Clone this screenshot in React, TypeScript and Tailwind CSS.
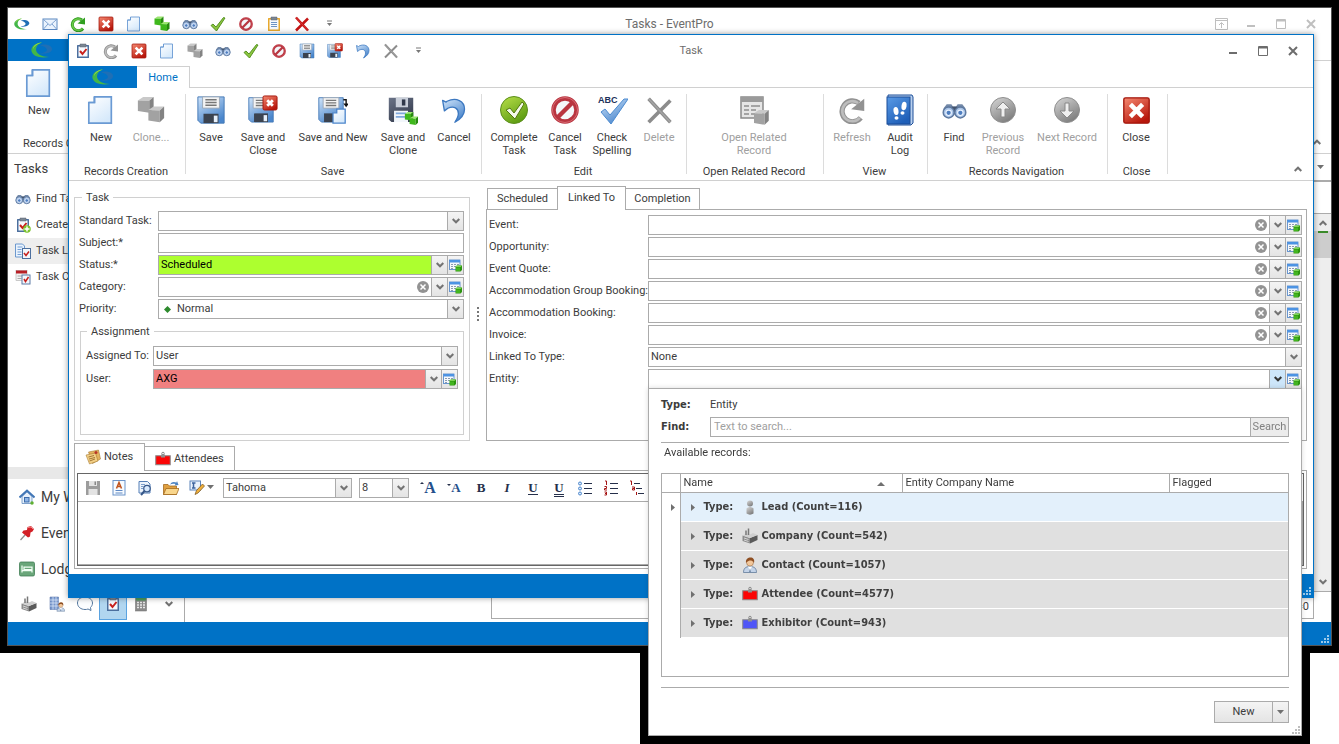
import { useState } from "react";
import type { ReactNode } from "react";

type IconProps = { size?: number; gray?: boolean };

function Icon({ size = 16, box = "0 0 32 32", children }: { size?: number; box?: string; children: ReactNode }) {
  return (
    <svg width={size} height={size} viewBox={box} fill="none" aria-hidden="true" className="block shrink-0">
      {children}
    </svg>
  );
}

/* shared gradients, referenced by id from every icon */
function Gradients() {
  const stops = [
    ["gBlue", "#cfe4fa", "#4a86cc"],
    ["gPage", "#ffffff", "#d6e9fb"],
    ["gRed", "#f58a72", "#b8170c"],
    ["gGreen", "#b9e04a", "#5d9c12"],
    ["gGray", "#d8d8d8", "#7f7f7f"],
    ["gBook", "#5a9be6", "#1f5fb8"],
    ["gDark", "#6b7488", "#343b4d"],
  ];
  return (
    <svg width="0" height="0" className="absolute" aria-hidden="true">
      <defs>
        {stops.map(([id, from, to]) => (
          <linearGradient key={id} id={id} x1="0" y1="0" x2="0.6" y2="1">
            <stop offset="0" stopColor={from} />
            <stop offset="1" stopColor={to} />
          </linearGradient>
        ))}
      </defs>
    </svg>
  );
}

function Logo({ width = 22 }: { width?: number }) {
  return (
    <svg width={width} height={16} viewBox="0 0 22 16" aria-hidden="true" className="block">
      <path d="M11 .5C3 1-1 6 .8 10 2.600 14 8 16.500 18 15 11 15 5 12 5 7.500 5 4 7 2 11 .5Z" fill="#43b649" />
      <path d="M11 .5C5 1 2 4 2 7c1-3 4-5 9-6.500Z" fill="#9bd84a" />
      <path d="M9 3.500C14 1 22 3.500 21 7.800 20 11 14 12.300 9 11.500c5-.6 8-2.500 6.500-4.800C14.500 4.800 12 4 9 3.500Z" fill="#1f6fb5" />
    </svg>
  );
}

function Mail() {
  return (
    <Icon>
      <rect x="2" y="6" width="28" height="21" fill="#eaf3fd" stroke="#5b87bf" strokeWidth="2" />
      <path d="M3 7l13 12L29 7M3 26l9-10M29 26l-9-10" stroke="#7fa3d1" strokeWidth="2" />
    </Icon>
  );
}

function Refresh({ size, gray }: IconProps) {
  const color = gray ? "#929292" : "#2f9e1f";
  const light = gray ? "#bdbdbd" : "#6cc94a";
  return (
    <Icon size={size}>
      <path d="M26 25A12 12 0 1 1 24 8" stroke={color} strokeWidth="6" />
      <path d="M25 25A11.500 11.500 0 1 1 23 8" stroke={light} strokeWidth="3" />
      <path d="M30 3v14l-15-2Z" fill={color} />
    </Icon>
  );
}

function CloseBox({ size }: IconProps) {
  return (
    <Icon size={size}>
      <rect x="2" y="2" width="28" height="28" rx="2" fill="url(#gRed)" stroke="#a3150b" strokeWidth="1.500" />
      <path d="M11 11l10 10M21 11L11 21" stroke="#fff" strokeWidth="5" strokeLinecap="square" />
    </Icon>
  );
}

function Page({ size }: IconProps) {
  return (
    <Icon size={size}>
      <path d="M9 2h18v28H3V8h6Z" fill="url(#gPage)" stroke="#6a9ad4" strokeWidth="1.800" />
      <path d="M9 2v6H3" stroke="#6a9ad4" strokeWidth="1.800" />
    </Icon>
  );
}

function CubeShape({ x, y, gray, s = 1 }: { x: number; y: number; gray?: boolean; s?: number }) {
  const [top, front, side] = gray ? ["#c9c9c9", "#a2a2a2", "#838383"] : ["#9be66f", "#3fb81c", "#268a0d"];
  return (
    <g transform={`translate(${x} ${y}) scale(${s})`}>
      <path d="M0 4L6 0h12l-5 4.500Z" fill={top} />
      <path d="M0 4l13 .5V18L0 16Z" fill={front} />
      <path d="M13 4.500L18 0v13l-5 5Z" fill={side} />
    </g>
  );
}

function Cubes({ size, gray }: IconProps) {
  return (
    <Icon size={size}>
      <CubeShape x={1} y={1} gray={gray} />
      <CubeShape x={13} y={12} gray={gray} />
    </Icon>
  );
}

function Binoculars({ size }: IconProps) {
  return (
    <Icon size={size}>
      <path d="M2 13l4-5h6l2 3h4l2-3h6l4 5v8H2Z" fill="#7389a8" />
      <path d="M12 11h8v9h-8Z" fill="#43546e" />
      <circle cx="8.500" cy="18.500" r="7" fill="#a9c3e6" stroke="#5d789e" strokeWidth="1.800" />
      <circle cx="23.500" cy="18.500" r="7" fill="#a9c3e6" stroke="#5d789e" strokeWidth="1.800" />
      <circle cx="8.500" cy="19" r="3.500" fill="#4f7ec0" stroke="#e8f2ff" strokeWidth="1.500" />
      <circle cx="23.500" cy="19" r="3.500" fill="#4f7ec0" stroke="#e8f2ff" strokeWidth="1.500" />
    </Icon>
  );
}

function CheckMark() {
  return (
    <Icon>
      <path d="M2 19l4-3 6 6L27 3l3 1-17 26Z" fill="#8cc540" stroke="#4b8a16" strokeWidth="1.800" strokeLinejoin="round" />
    </Icon>
  );
}

function Ban({ size }: IconProps) {
  return (
    <Icon size={size}>
      <circle cx="16" cy="16" r="11.500" fill="#f4f7fa" stroke="#b93540" strokeWidth="4.500" />
      <path d="M8 24L24 8" stroke="#b93540" strokeWidth="4.500" />
      <circle cx="16" cy="16" r="12.500" stroke="#d76a72" strokeWidth="1" />
    </Icon>
  );
}

function Clipboard({ checked, plus, amber }: { checked?: boolean; plus?: boolean; amber?: boolean }) {
  return (
    <Icon>
      <rect x="4" y="4" width="24" height="26" rx="1" fill={amber ? "#e8a92e" : "#4c6f9e"} />
      <rect x="7" y="7" width="18" height="20" fill="#f5f9fe" />
      <path d="M10 2h12v6H10Z" fill="#7c8793" stroke="#586370" />
      {amber && <path d="M10 13h12M10 17h12M10 21h12" stroke="#6d93c4" strokeWidth="2" />}
      {checked && <path d="M10 16l5 6 8-10" stroke="#c8201c" strokeWidth="4" />}
      {plus && (
        <>
          <circle cx="24" cy="24" r="7.500" fill="#7cc32c" />
          <path d="M24 19v10M19 24h10" stroke="#fff" strokeWidth="3" />
        </>
      )}
    </Icon>
  );
}

function Cross({ size, gray }: IconProps) {
  return (
    <Icon size={size}>
      <path d="M4 3l24 26M28 5L4 29" stroke={gray ? "#8c8c8c" : "#c41414"} strokeWidth={gray ? 4 : 5} />
      <path d="M4 3l24 26" stroke={gray ? "#a5a5a5" : "#e04040"} strokeWidth="1.500" />
    </Icon>
  );
}

function FloppyShape({ dark }: { dark?: boolean }) {
  if (dark) {
    return (
      <g>
        <path d="M2 2h28v28H5l-3-3Z" fill="url(#gDark)" />
        <path d="M10 2h14v11H10Z" fill="#c9cfda" />
        <path d="M17 4h4v7h-4Z" fill="#30384a" />
        <path d="M8 17h16v13H8Z" fill="#f2f6fb" />
        <path d="M10 20h12M10 24h12" stroke="#7fa8dc" strokeWidth="2" />
      </g>
    );
  }
  return (
    <g>
      <path d="M2 2h28v28H5l-3-3Z" fill="url(#gBlue)" stroke="#4378b5" />
      <path d="M7 2h18v12H7Z" fill="#f4f4f4" stroke="#9ba7b5" />
      <path d="M10 5h12M10 8h12M10 11h12" stroke="#777" strokeWidth="1.500" />
      <path d="M8 20h16v10H8Z" fill="#3b4350" />
      <path d="M19 22h4v7h-4Z" fill="#e6f0fb" />
    </g>
  );
}

function Floppy({ size, dark, badge }: IconProps & { dark?: boolean; badge?: "close" | "new" | "clone" }) {
  return (
    <Icon size={size}>
      {badge ? (
        <g transform="translate(-1 1) scale(.93)">
          <FloppyShape dark={dark} />
        </g>
      ) : (
        <FloppyShape dark={dark} />
      )}
      {badge === "close" && (
        <>
          <rect x="16" y="1" width="15" height="15" rx="1.500" fill="url(#gRed)" stroke="#a3150b" />
          <path d="M20.500 5.500l6 6M26.500 5.500l-6 6" stroke="#fff" strokeWidth="3" />
        </>
      )}
      {badge === "new" && (
        <>
          <path d="M20 15h9v15H16V19h4Z" fill="url(#gPage)" stroke="#4d86cc" strokeWidth="1.400" />
          <path d="M27 5h3v6" stroke="#111" strokeWidth="1.500" />
          <path d="M27 9h6l-3 4Z" fill="#111" />
        </>
      )}
      {badge === "clone" && (
        <>
          <CubeShape x={18} y={18} s={0.5} />
          <CubeShape x={23} y={23} s={0.5} />
        </>
      )}
    </Icon>
  );
}

function Undo({ size }: IconProps) {
  return (
    <Icon size={size}>
      <path
        d="M3 5l2 12 4-3c7-3 12 0 12 6 0 4-2 7-4 10 7-4 11-9 11-15C28 6 19 1 8 6l-1 1Z"
        fill="url(#gBlue)"
        stroke="#3c78c0"
        strokeWidth="1.500"
        strokeLinejoin="round"
      />
    </Icon>
  );
}

function CompleteTask() {
  return (
    <Icon size={32}>
      <circle cx="16" cy="16" r="13.500" fill="url(#gGreen)" stroke="#5c8f1d" />
      <path d="M8 16l4-2 4 5 8-11 2 2-9 15Z" fill="#f4faea" stroke="#52770f" strokeLinejoin="round" />
    </Icon>
  );
}

function Spelling() {
  return (
    <Icon size={32}>
      <text x="2" y="9" fontFamily="Liberation Sans, sans-serif" fontWeight="700" fontSize="9" fill="#20305a">
        ABC
      </text>
      <path d="M5 18l4-3 5 6L28 5l4 0-17 25Z" fill="url(#gBlue)" stroke="#4c8bd0" strokeLinejoin="round" />
    </Icon>
  );
}

function RelatedRecord() {
  return (
    <Icon size={32}>
      <rect x="3" y="3" width="22" height="21" fill="#e6e6e6" stroke="#8a8a8a" strokeWidth="1.500" />
      <path d="M3 3h22v5H3Z" fill="#9a9a9a" />
      <path d="M6 12h5M6 16h5M6 20h5M13 12h9M13 16h5M13 20h4" stroke="#8f8f8f" strokeWidth="1.500" />
      <CubeShape x={16} y={16} gray s={0.820} />
    </Icon>
  );
}

function AuditBook() {
  return (
    <Icon size={32}>
      <path d="M4 1h24l1 2v26l-2 2H4Z" fill="#b9d0ee" stroke="#1c4f99" />
      <rect x="3" y="3" width="23" height="27" fill="url(#gBook)" stroke="#1b4d98" />
      <g fill="#fff">
        <ellipse cx="12" cy="17" rx="2.500" ry="4" transform="rotate(-8 12 17)" />
        <ellipse cx="12.500" cy="24" rx="2" ry="1.800" />
        <ellipse cx="20" cy="12" rx="2.500" ry="4.200" transform="rotate(8 20 12)" />
        <ellipse cx="18.500" cy="19" rx="2" ry="1.800" />
      </g>
    </Icon>
  );
}

function RoundArrow({ down }: { down?: boolean }) {
  return (
    <Icon size={32}>
      <circle cx="16" cy="16" r="12.500" fill="url(#gGray)" stroke="#8e8e8e" />
      <path
        d={down ? "M14 9h4v8h5l-7 7-7-7h5Z" : "M14 23h4v-8h5l-7-7-7 7h5Z"}
        fill="#efefef"
        stroke="#888"
        strokeLinejoin="round"
      />
    </Icon>
  );
}

function TaskList() {
  return (
    <Icon>
      <path d="M1 2h14l4 4v22H1Z" fill="#eaf3fd" stroke="#5f8fc9" strokeWidth="1.800" />
      <path d="M5 8h10M5 13h8M5 18h8M5 23h8" stroke="#74a0d6" strokeWidth="2" />
      <rect x="15" y="11" width="16" height="20" fill="#f3f7fc" stroke="#4c6f9e" strokeWidth="2" />
      <path d="M18 20l4 5 6-8" stroke="#c8201c" strokeWidth="3" />
    </Icon>
  );
}

function TaskCalendar() {
  return (
    <Icon>
      <rect x="2" y="3" width="22" height="20" fill="#f3f3f3" stroke="#999" />
      <path d="M2 3h22v6H2Z" fill="#b81f26" />
      <path d="M5 14h14M5 19h8" stroke="#a8a8a8" strokeWidth="2" />
      <rect x="14" y="12" width="16" height="18" fill="#f3f7fc" stroke="#5c7ba5" strokeWidth="2" />
      <path d="M18 20l3 5 6-9" stroke="#c8201c" strokeWidth="3" />
    </Icon>
  );
}

function House() {
  return (
    <Icon>
      <path d="M6 15v14h20V15L16 6Z" fill="#e7f0fb" stroke="#5a86bb" strokeWidth="1.500" />
      <path d="M1 17L16 3l15 14" stroke="#4176b6" strokeWidth="4" />
      <rect x="11" y="17" width="9" height="9" fill="#8db4e6" stroke="#3d6cab" strokeWidth="2" />
      <circle cx="26" cy="28" r="3.500" fill="#5fb030" />
    </Icon>
  );
}

function Pin() {
  return (
    <Icon>
      <path d="M12 20L3 30" stroke="#8b8b8b" strokeWidth="2.500" />
      <path d="M17 4l7-2 6 6-3 5-4 2-1 8-4 2L6 15l3-4 7-1Z" fill="#d32027" />
      <path d="M18 5l6-1 4 4" stroke="#f28a8a" strokeWidth="2" />
    </Icon>
  );
}

function Lodging() {
  return (
    <Icon>
      <rect x="1" y="2" width="30" height="28" rx="3" fill="#6aa67a" stroke="#3c7a50" strokeWidth="1.500" />
      <path d="M6 9v14M6 19h20v4M10 12h16v5H10Z" stroke="#f3fff6" strokeWidth="2.500" />
    </Icon>
  );
}

function Factory() {
  return (
    <Icon>
      <path d="M1 15l15 5v11L1 26Z" fill="#8c8c8c" />
      <path d="M16 20l15-6v10l-15 7Z" fill="#5a5a5a" />
      <path d="M1 15l9-4 6 2 6-3 9 4-15 6Z" fill="#cfcfcf" />
      <path d="M8 5v9M13 1v13" stroke="#777" strokeWidth="3" />
      <path d="M4 20l9 3M4 24l9 3" stroke="#ececec" strokeWidth="1.500" />
    </Icon>
  );
}

function PersonShape() {
  return (
    <g>
      <path d="M3 31c0-8 4-12 13-12s13 4 13 12Z" fill="#c3d3e8" stroke="#5b7596" strokeWidth="1.500" />
      <path d="M12 19l4 9 4-9Z" fill="#fff" />
      <path d="M16 22l-1.500 8h3Z" fill="#5b7596" />
      <circle cx="16" cy="11" r="7" fill="#f2c79b" stroke="#8a5a30" />
      <path d="M8 12C7 4 12 1 17 1s9 4 7 11c-2-5-6-5-9-5-3 1-5 2-7 5Z" fill="#8f4f22" />
    </g>
  );
}

function Contact() {
  return (
    <Icon>
      <PersonShape />
    </Icon>
  );
}

function BuildingPerson() {
  return (
    <Icon>
      <path d="M2 2h17v25H2Z" fill="#7796cb" stroke="#4d6aa3" />
      <path d="M2 8h17M2 14h17M2 20h17M8 2v25M14 2v25" stroke="#dce8fa" strokeWidth="1.500" />
      <g transform="translate(14 12) scale(.6)">
        <PersonShape />
      </g>
    </Icon>
  );
}

function Bubble() {
  return (
    <Icon>
      <path
        d="M16 2c8 0 15 5 15 12 0 4-2 7-4 9l1 6-6-3c-2 1-4 1-6 1C8 27 1 22 1 14S8 2 16 2Z"
        fill="#fbfdff"
        stroke="#55789f"
        strokeWidth="2"
      />
    </Icon>
  );
}

function Calculator() {
  return (
    <Icon>
      <rect x="5" y="2" width="22" height="28" fill="#8a8a8a" stroke="#6a6a6a" />
      <rect x="6" y="3" width="20" height="6" fill="#4f9e5c" />
      <path d="M8 13h4M14 13h4M20 13h4M8 18h4M14 18h4M20 18h4M8 23h4M14 23h4M20 23h4" stroke="#e8e8e8" strokeWidth="3" />
    </Icon>
  );
}

function Lead() {
  return (
    <Icon>
      <circle cx="16" cy="9" r="6" fill="url(#gGray)" />
      <path d="M9 19c4-4 10-4 14 0v10c-4 3-10 3-14 0Z" fill="url(#gGray)" />
    </Icon>
  );
}

function Badge({ blue }: { blue?: boolean }) {
  return (
    <Icon>
      <rect x="1.500" y="9.500" width="29" height="18" fill={blue ? "#4f55f7" : "#fb0505"} stroke="#888" strokeWidth="2" />
      <path d="M12 7h8v6h-8Z" fill="#909090" />
      <circle cx="16" cy="5" r="2.500" stroke="#888" strokeWidth="2" />
    </Icon>
  );
}

function NoteIcon() {
  return (
    <Icon>
      <path d="M7 6l20-4 4 18-16 9Z" fill="#e3b45f" stroke="#9a6b1f" />
      <path d="M2 12l19-4 5 16-17 6Z" fill="#f2cf86" stroke="#9a6b1f" />
      <path d="M7 16l11-3M8 20l12-3M9 24l11-4" stroke="#8a5a18" strokeWidth="1.500" />
      <circle cx="22" cy="7" r="3" fill="#b8352a" />
    </Icon>
  );
}

function RecordLink() {
  return (
    <Icon size={13} box="0 0 26 26">
      <rect x="1" y="2" width="21" height="19" fill="#f5f8fc" stroke="#3c78c4" strokeWidth="1.500" />
      <path d="M1 2h21v5H1Z" fill="#4c93e3" />
      <path d="M4 11h4M10 11h4M16 11h4M4 15h4M10 15h4M4 19h4" stroke="#8b9bb0" strokeWidth="2" />
      <path d="M13 15l3-2h10v9l-3 3H13Z" fill="#2c940f" />
      <path d="M13 15l3-2h10l-3 3H13Z" fill="#7ed455" />
      <path d="M14 17h8v7h-8Z" fill="#43b520" />
    </Icon>
  );
}

function Chevron({ up, color = "#737373" }: { up?: boolean; color?: string }) {
  return (
    <svg width="8" height="6" viewBox="0 0 8 6" fill="none" aria-hidden="true">
      <path d={up ? "M.7 5L4 1.700 7.300 5" : "M.7 1L4 4.300 7.300 1"} stroke={color} strokeWidth="2" />
    </svg>
  );
}

function Arrow({ dir = "down" }: { dir?: "down" | "up" | "right" }) {
  const paths = { down: "M1 2h7L4.500 6Z", up: "M1 7h8L5 3Z", right: "M3 1v7L7 4.500Z" };
  return (
    <svg width="9" height="9" viewBox="0 0 9 9" aria-hidden="true" className="block shrink-0">
      <path d={paths[dir]} fill="#707070" />
    </svg>
  );
}

function Overflow() {
  return (
    <svg width="7" height="7" viewBox="0 0 7 7" aria-hidden="true">
      <path d="M1 1h5" stroke="#777" />
      <path d="M1 3h5L3.500 6Z" fill="#777" />
    </svg>
  );
}

function Grip({ className }: { className: string }) {
  return (
    <svg width="8" height="8" viewBox="0 0 8 8" aria-hidden="true" className={className}>
      <path d="M6 0h2v2H6ZM3 3h2v2H3ZM6 3h2v2H6ZM0 6h2v2H0ZM3 6h2v2H3ZM6 6h2v2H6Z" fill="currentColor" />
    </svg>
  );
}

function QuickBar({ items }: { items: [string, ReactNode][] }) {
  return (
    <div className="flex items-center">
      {items.map(([name, icon]) => (
        <button key={name} type="button" aria-label={name} className="flex h-6 w-7 items-center justify-center pr-px">
          {icon}
        </button>
      ))}
    </div>
  );
}

function WindowButtons({ pinned }: { pinned?: boolean }) {
  return (
    <div className={pinned ? "flex justify-end pr-[5px] text-[#bfbfbf]" : "flex justify-end pr-[5px] text-[#6d6d6d]"}>
      {pinned && (
        <button type="button" aria-label="Ribbon display" className="flex h-6 w-[30px] items-center justify-center">
          <svg width="13" height="12" viewBox="0 0 13 12" fill="none" stroke="currentColor">
            <path d="M.5.5h12v11H.5ZM.5 2.500h12M6.500 10V5M4 7l2.500-2.500L9 7" />
          </svg>
        </button>
      )}
      <button type="button" aria-label="Minimize" className="flex h-6 w-[30px] items-center justify-center pt-1">
        <svg width="8" height="2" viewBox="0 0 8 2">
          <path d="M0 0h8v2H0Z" fill="currentColor" />
        </svg>
      </button>
      <button type="button" aria-label="Maximize" className="flex h-6 w-[30px] items-center justify-center">
        <svg width="10" height="10" viewBox="0 0 10 10" fill="none" stroke="currentColor">
          <path d="M.5.5h9v9h-9ZM0 1.500h10M0 2h10" />
        </svg>
      </button>
      <button type="button" aria-label="Close window" className="flex h-6 w-[30px] items-center justify-center">
        <svg width="10" height="10" viewBox="0 0 10 10" stroke="currentColor" strokeWidth="2">
          <path d="M1 1l8 8M9 1L1 9" />
        </svg>
      </button>
    </div>
  );
}

function RibbonItem({
  label,
  icon,
  width,
  disabled,
}: {
  label: string;
  icon: ReactNode;
  width: string;
  disabled?: boolean;
}) {
  return (
    <button type="button" disabled={disabled} className={`${width} flex shrink-0 flex-col items-center gap-[5px] disabled:text-[#a0a0a0]`}>
      <span className="flex h-8 items-center justify-center">{icon}</span>
      <span className="text-center leading-[13px] whitespace-pre">{label}</span>
    </button>
  );
}

function RibbonGroup({ title, width, children }: { title: string; width: string; children: ReactNode }) {
  return (
    <>
      <div className={`${width} flex shrink-0 flex-col pt-1.5 pr-1.5 pb-0.5 pl-1`}>
        <div className="flex items-start">{children}</div>
        <div className="mt-auto text-center leading-[13px] whitespace-nowrap">{title}</div>
      </div>
      <div className="my-1.5 w-px shrink-0 bg-[#dcdcdc]" />
    </>
  );
}

const BOX = "flex h-5 min-w-0 border border-[#ababab] bg-white";
const SIDE_BUTTON =
  "flex w-4 shrink-0 items-center justify-center border-l border-[#ababab] bg-linear-to-b from-[#f4f4f4] to-[#e4e4e4]";

function Lookup({
  id,
  value = "",
  tone = "bg-white",
  clearable,
  open,
}: {
  id: string;
  value?: string;
  tone?: string;
  clearable?: boolean;
  open?: boolean;
}) {
  const [text, setText] = useState(value);
  return (
    <div className={BOX}>
      <input
        id={id}
        value={text}
        onChange={(e) => setText(e.target.value)}
        className={`${tone} w-full min-w-0 flex-1 px-0.5 text-black outline-none`}
      />
      {clearable && (
        <button type="button" aria-label="Clear" className="flex w-4 shrink-0 items-center justify-center" onClick={() => setText("")}>
          <svg width="12" height="12" viewBox="0 0 12 12">
            <circle cx="6" cy="6" r="6" fill="#939393" />
            <path d="M3.500 3.500l5 5M8.500 3.500l-5 5" stroke="#fff" strokeWidth="1.500" />
          </svg>
        </button>
      )}
      <button
        type="button"
        aria-label="Show list"
        className={open ? "flex w-4 shrink-0 items-center justify-center border-l border-[#ababab] bg-[#cde6fa]" : SIDE_BUTTON}
      >
        <Chevron color={open ? "#333333" : "#737373"} />
      </button>
      <button type="button" aria-label="Open record" className={SIDE_BUTTON}>
        <RecordLink />
      </button>
    </div>
  );
}

function Dropdown({ id, value = "", icon }: { id: string; value?: string; icon?: ReactNode }) {
  return (
    <div className={`${BOX} relative`}>
      {icon && <span className="flex w-4 shrink-0 items-center justify-center">{icon}</span>}
      <select id={id} defaultValue={value} aria-label={id} className="w-full min-w-0 appearance-none bg-transparent px-0.5 outline-none">
        <option>{value}</option>
      </select>
      <span className={`${SIDE_BUTTON} pointer-events-none absolute inset-y-0 right-0`}>
        <Chevron />
      </span>
    </div>
  );
}

const LINKS = ["Event", "Opportunity", "Event Quote", "Accommodation Group Booking", "Accommodation Booking", "Invoice"];

const GROUPS: [string, number, ReactNode][] = [
  ["Lead", 116, <Lead />],
  ["Company", 542, <Factory />],
  ["Contact", 1057, <Contact />],
  ["Attendee", 4577, <Badge />],
  ["Exhibitor", 943, <Badge blue />],
];

const NAV: [string, ReactNode][] = [
  ["Find Tasks", <Binoculars />],
  ["Create Task", <Clipboard checked plus />],
  ["Task List", <TaskList />],
  ["Task Calendar", <TaskCalendar />],
];

const MODULES: [string, ReactNode][] = [
  ["My Work", <House />],
  ["Events", <Pin />],
  ["Lodging", <Lodging />],
];

function MainWindow() {
  return (
    <div className="flex h-full flex-col border border-[#555] bg-white">
      <div className="grid h-[31px] shrink-0 grid-cols-[1fr_auto_1fr] items-center">
        <QuickBar
          items={[
            ["EventPro", <Logo width={16} />],
            ["Email", <Mail />],
            ["Refresh", <Refresh />],
            ["Close", <CloseBox />],
            ["New", <Page />],
            ["Clone", <Cubes />],
            ["Find", <Binoculars />],
            ["Complete", <CheckMark />],
            ["Cancel", <Ban />],
            ["Paste", <Clipboard amber />],
            ["Delete", <Cross />],
            ["More", <Overflow />],
          ]}
        />
        <span className="text-[12px] text-[#6d6d6d]">Tasks - EventPro</span>
        <WindowButtons pinned />
      </div>
      <div className="flex h-[22px] shrink-0">
        <button type="button" aria-label="Application menu" className="flex w-[68px] items-center justify-center bg-[#0072c6]">
          <Logo />
        </button>
        <div className="flex-1 border-b border-[#d0d0d0]" />
      </div>
      <div className="flex h-[93px] shrink-0 border-b border-[#d0d0d0]">
        <div className="flex w-[114px] flex-col px-1 pt-1.5">
          <RibbonItem label="New" width="w-[54px]" icon={<Page size={30} />} />
          <div className="mt-auto pb-[3px] text-center leading-[13px]">Records Creation</div>
        </div>
        <button type="button" aria-label="Collapse ribbon" className="mt-auto mr-2.5 mb-2 ml-auto">
          <Chevron up />
        </button>
      </div>

      <div className="flex min-h-0 flex-1">
        <nav className="flex w-[177px] shrink-0 flex-col border-r border-[#ababab]">
          <h1 className="px-1.5 py-1.5 text-[13px] leading-[18px]">Tasks</h1>
          <ul className="mt-0.5 leading-[26px]">
            {NAV.map(([name, icon]) => (
              <li key={name}>
                <a href="#" className={name === "Task List" ? "flex items-center gap-[5px] bg-[#eeeeee] pl-[7px]" : "flex items-center gap-[5px] pl-[7px]"}>
                  {icon}
                  {name}
                </a>
              </li>
            ))}
          </ul>
          <div className="mt-auto h-3 bg-[#e8e8e8]" />
          <ul className="text-[14px] leading-9">
            {MODULES.map(([name, icon]) => (
              <li key={name}>
                <a href="#" className="flex items-center gap-1.5 pl-[11px]">
                  {icon}
                  {name}
                </a>
              </li>
            ))}
          </ul>
          <div className="flex h-[35px] pb-0.5 pl-[7px]">
            <button type="button" aria-label="Companies" className="flex w-7 items-center justify-center"><Factory /></button>
            <button type="button" aria-label="Contacts" className="flex w-7 items-center justify-center"><BuildingPerson /></button>
            <button type="button" aria-label="Messages" className="flex w-7 items-center justify-center"><Bubble /></button>
            <button type="button" aria-label="Tasks" className="flex w-7 items-center justify-center border border-[#5ba3e0] bg-[#b1d6f0]"><Clipboard checked /></button>
            <button type="button" aria-label="Calculator" className="flex w-7 items-center justify-center"><Calculator /></button>
            <button type="button" aria-label="More modules" className="flex w-7 items-center justify-center"><Chevron /></button>
          </div>
        </nav>

        <div className="flex min-w-0 flex-1 flex-col">
          <div className="flex h-[28px] items-center justify-end border-b-2 border-[#ababab] pr-1.5">
            <Arrow />
          </div>
          <div className="h-8 border-b border-[#ababab]" />
          <div className="flex min-h-0 flex-1 justify-end border-b border-[#ababab]">
            <div className="flex w-[17px] flex-col bg-[#eeeeee]">
              <span className="flex h-[17px] items-center justify-center"><Chevron up /></span>
              <span className="flex h-[27px] justify-center bg-[#cdcdcd]"><span className="h-0.5 w-2.5 bg-[#3a8a2a]" /></span>
              <span className="mt-auto flex h-[18px] items-center justify-center"><Chevron /></span>
            </div>
          </div>
          <div className="mr-[17px] mb-[3px] ml-[306px] flex h-[27px] items-end justify-end border-r border-b border-l border-[#ababab] px-1 pb-1 leading-[14px]">
            Count=0
          </div>
        </div>
      </div>
      <div className="relative h-[23px] shrink-0 bg-[#0072c6]">
        <Grip className="absolute right-0.5 bottom-0.5 text-[#9cc9ea]" />
      </div>
    </div>
  );
}

function TaskRibbon() {
  return (
    <div className="flex h-[93px] shrink-0 border-b border-[#d0d0d0]">
      <RibbonGroup title="Records Creation" width="w-[116px]">
        <RibbonItem label="New" width="w-[56px]" icon={<Page size={30} />} />
        <RibbonItem label="Clone..." width="w-[44px]" icon={<Cubes size={28} gray />} disabled />
      </RibbonGroup>
      <RibbonGroup title="Save" width="w-[295px]">
        <RibbonItem label="Save" width="w-[42px]" icon={<Floppy size={30} />} />
        <RibbonItem label={"Save and\nClose"} width="w-[62px]" icon={<Floppy size={30} badge="close" />} />
        <RibbonItem label="Save and New" width="w-[78px]" icon={<Floppy size={30} badge="new" />} />
        <RibbonItem label={"Save and\nClone"} width="w-[62px]" icon={<Floppy size={30} dark badge="clone" />} />
        <RibbonItem label="Cancel" width="w-[40px]" icon={<Undo size={28} />} />
      </RibbonGroup>
      <RibbonGroup title="Edit" width="w-[204px]">
        <RibbonItem label={"Complete\nTask"} width="w-[56px]" icon={<CompleteTask />} />
        <RibbonItem label={"Cancel\nTask"} width="w-[46px]" icon={<Ban size={32} />} />
        <RibbonItem label={"Check\nSpelling"} width="w-[48px]" icon={<Spelling />} />
        <RibbonItem label="Delete" width="w-[46px]" icon={<Cross size={29} gray />} disabled />
      </RibbonGroup>
      <RibbonGroup title="Open Related Record" width="w-[136px]">
        <RibbonItem label={"Open Related\nRecord"} width="w-[126px]" icon={<RelatedRecord />} disabled />
      </RibbonGroup>
      <RibbonGroup title="View" width="w-[103px]">
        <RibbonItem label="Refresh" width="w-[48px]" icon={<Refresh size={28} gray />} disabled />
        <RibbonItem label={"Audit\nLog"} width="w-[48px]" icon={<AuditBook />} />
      </RibbonGroup>
      <RibbonGroup title="Records Navigation" width="w-[179px]">
        <RibbonItem label="Find" width="w-[44px]" icon={<Binoculars size={25} />} />
        <RibbonItem label={"Previous\nRecord"} width="w-[54px]" icon={<RoundArrow />} disabled />
        <RibbonItem label="Next Record" width="w-[74px]" icon={<RoundArrow down />} disabled />
      </RibbonGroup>
      <RibbonGroup title="Close" width="w-[59px]">
        <RibbonItem label="Close" width="w-[48px]" icon={<CloseBox size={29} />} />
      </RibbonGroup>
      <button type="button" aria-label="Collapse ribbon" className="mt-auto mr-[11px] mb-2 ml-auto">
        <Chevron up />
      </button>
    </div>
  );
}

function TaskFields() {
  return (
    <fieldset className="flex w-[396px] shrink-0 flex-col border border-[#d0d0d0] px-1 pt-[7px] pb-[5px]">
      <legend className="ml-[3px] px-1 leading-[13px]">Task</legend>
      <div className="grid grid-cols-[79px_1fr] items-center gap-y-0.5 pr-px">
        <label htmlFor="standard">Standard Task:</label>
        <Dropdown id="standard" />
        <label htmlFor="subject">Subject:*</label>
        <input id="subject" className={`${BOX} w-full px-0.5 outline-none`} />
        <label htmlFor="status">Status:*</label>
        <Lookup id="status" value="Scheduled" tone="bg-[#adff2f]" />
        <label htmlFor="category">Category:</label>
        <Lookup id="category" clearable />
        <label htmlFor="priority">Priority:</label>
        <Dropdown
          id="priority"
          value="Normal"
          icon={
            <svg width="7" height="7" viewBox="0 0 7 7">
              <path d="M3.500 0L7 3.500 3.500 7 0 3.500Z" fill="#2d8a2d" />
            </svg>
          }
        />
      </div>
      <fieldset className="mt-1.5 mr-px ml-px flex-1 border border-[#d0d0d0] px-[5px] pt-2">
        <legend className="ml-px px-1 leading-[13px]">Assignment</legend>
        <div className="grid grid-cols-[67px_1fr] items-center gap-y-[3px]">
          <label htmlFor="assigned">Assigned To:</label>
          <Dropdown id="assigned" value="User" />
          <label htmlFor="user">User:</label>
          <Lookup id="user" value="AXG" tone="bg-[#f08080]" />
        </div>
      </fieldset>
    </fieldset>
  );
}

function LinkedPanel() {
  return (
    <div className="flex min-w-0 flex-1 flex-col">
      <div className="flex items-end pl-px">
        <button type="button" className="h-[21px] w-[71px] border border-b-0 border-[#ababab]">Scheduled</button>
        <button type="button" className="relative -mb-px -ml-px h-6 w-[69px] border border-b-0 border-[#ababab] bg-white pb-0.5">
          Linked To
        </button>
        <button type="button" className="-ml-px h-[21px] w-[75px] border border-b-0 border-[#ababab]">Completion</button>
      </div>
      <div className="grid flex-1 grid-cols-[159px_1fr] content-start items-center gap-y-0.5 border border-[#ababab] pt-[5px] pr-1 pl-0.5">
        {LINKS.map((name) => (
          <div key={name} className="contents">
            <label htmlFor={name} className="whitespace-nowrap">{name}:</label>
            <Lookup id={name} clearable />
          </div>
        ))}
        <label htmlFor="linked-type">Linked To Type:</label>
        <Dropdown id="linked-type" value="None" />
        <label htmlFor="entity">Entity:</label>
        <Lookup id="entity" open />
      </div>
    </div>
  );
}

const TOOL = "flex h-6 w-[26px] shrink-0 items-center justify-center";

function LetterIcon({ letter, kind }: { letter: string; kind?: "italic" | "under" | "double" | "grow" | "shrink" }) {
  return (
    <svg width="18" height="18" viewBox="0 0 18 18" fill="none" aria-hidden="true" className="overflow-visible">
      <text
        x={kind === "grow" || kind === "shrink" ? 10 : 9}
        y={kind === "grow" ? 14 : 13}
        textAnchor="middle"
        fontFamily="Liberation Serif, serif"
        fontWeight="700"
        fontStyle={kind === "italic" ? "italic" : "normal"}
        fontSize={kind === "grow" ? 16 : 13}
        fill={kind === "grow" || kind === "shrink" ? "#25508c" : "#252f4a"}
      >
        {letter}
      </text>
      {(kind === "under" || kind === "double") && <path d="M4 15.500h10" stroke="#252f4a" />}
      {kind === "double" && <path d="M4 17.500h10" stroke="#252f4a" />}
      {kind === "grow" && <path d="M0 5h4L2 3Z" fill="#252f4a" />}
      {kind === "shrink" && <path d="M1 5h4L3 7Z" fill="#252f4a" />}
    </svg>
  );
}

function ListIcon({ kind }: { kind: "bullet" | "number" | "outline" }) {
  return (
    <svg width="16" height="16" viewBox="0 0 16 16" fill="none" aria-hidden="true">
      {kind === "outline" ? (
        <path d="M5 3.500h6M7 8.500h6M9 13.500h6" stroke="#252f4a" />
      ) : (
        <path d="M7 3.500h8M7 8.500h8M7 13.500h8" stroke="#252f4a" />
      )}
      {kind === "bullet" && (
        <g fill="#dbe9fa" stroke="#4a86cc">
          <circle cx="3" cy="3.500" r="1.500" />
          <circle cx="3" cy="8.500" r="1.500" />
          <circle cx="3" cy="13.500" r="1.500" />
        </g>
      )}
      {kind === "number" && <path d="M2 1h1.500v4M1.500 6.500h2v2h-2v1.500h2.500M1.500 12h2v3h-2M2 13.500h1.500" stroke="#a51414" />}
      {kind === "outline" && <path d="M1 1h1.500v4M3 7h2.500v3H3.500V8.500h2M7.500 12v3" stroke="#a51414" />}
    </svg>
  );
}

function NotesPanel() {
  return (
    <div className="flex min-h-0 flex-1 flex-col">
      <div className="flex items-end">
        <button type="button" className="relative -mb-px flex h-7 w-[71px] items-center gap-[3px] border border-b-0 border-[#ababab] bg-white pb-0.5 pl-[10px]">
          <NoteIcon />
          Notes
        </button>
        <button type="button" className="-ml-px flex h-6 w-[91px] items-center gap-[3px] border border-b-0 border-[#ababab] pl-[10px]">
          <Badge />
          Attendees
        </button>
      </div>
      <div className="flex flex-1 border border-[#ababab] p-0.5">
        <div className="flex min-w-0 flex-1 flex-col border border-[#666]">
          <div className="flex h-7 shrink-0 items-center overflow-hidden border-b border-[#ababab] pl-0.5">
            <button type="button" aria-label="Save note" className={TOOL}>
              <Icon>
                <path d="M2 2h28v28H2Z" fill="#9c9c9c" />
                <path d="M8 2h16v10H8ZM7 18h18v12H7Z" fill="#e3e3e3" />
                <path d="M19 3h3v7h-3Z" fill="#888" />
              </Icon>
            </button>
            <button type="button" aria-label="Font" className={TOOL}>
              <Icon>
                <rect x="4" y="1" width="24" height="29" fill="#f7fbff" stroke="#6a93c9" strokeWidth="2" />
                <path d="M11 17l5-12 5 12M13 13h6" stroke="#c0521b" strokeWidth="3" />
                <path d="M9 21h14M9 26h14" stroke="#5d88c4" strokeWidth="2" />
              </Icon>
            </button>
            <button type="button" aria-label="Preview" className={TOOL}>
              <Icon>
                <path d="M4 3h17l5 5v18H4Z" fill="#edf4fc" stroke="#557fb7" strokeWidth="2" />
                <path d="M8 9h8M8 13h5M8 17h4" stroke="#7c9fce" strokeWidth="2" />
                <circle cx="20" cy="17" r="6.500" fill="#d8eaff" stroke="#37588a" strokeWidth="2.500" />
                <path d="M15 22l-7 8" stroke="#37588a" strokeWidth="4" />
              </Icon>
            </button>
            <button type="button" aria-label="Open" className={TOOL}>
              <Icon>
                <path d="M1 9h9l3 3h14v17H1Z" fill="#e0a040" stroke="#a0651a" strokeWidth="1.500" />
                <path d="M6 17h26l-5 12H1Z" fill="#f9d68c" stroke="#a0651a" strokeWidth="1.500" />
                <path d="M14 9c3-6 8-6 13-4l1-3 3 8-8 1 2-3c-4-1-7-1-11 1Z" fill="#4c84c4" />
              </Icon>
            </button>
            <button type="button" aria-label="Styles" className={TOOL}>
              <Icon>
                <rect x="2" y="2" width="21" height="18" fill="#eaf2fc" stroke="#5c84ba" strokeWidth="2" />
                <path d="M9 6v10M6 6h7M6 16h7" stroke="#3d649e" strokeWidth="3" />
                <path d="M12 29l3-8L27 8l4 4-13 14Z" fill="#f0b03c" stroke="#7a5620" strokeWidth="1.500" />
              </Icon>
            </button>
            <span className="-ml-1"><Arrow /></span>
            <span className="ml-2 block w-[129px] shrink-0"><Dropdown id="font" value="Tahoma" /></span>
            <span className="mx-[7px] block w-[50px] shrink-0"><Dropdown id="font-size" value="8" /></span>
            <button type="button" aria-label="Grow font" className={TOOL}><LetterIcon letter="A" kind="grow" /></button>
            <button type="button" aria-label="Shrink font" className={TOOL}><LetterIcon letter="A" kind="shrink" /></button>
            <button type="button" aria-label="Bold" className={TOOL}><LetterIcon letter="B" /></button>
            <button type="button" aria-label="Italic" className={TOOL}><LetterIcon letter="I" kind="italic" /></button>
            <button type="button" aria-label="Underline" className={TOOL}><LetterIcon letter="U" kind="under" /></button>
            <button type="button" aria-label="Double underline" className={TOOL}><LetterIcon letter="U" kind="double" /></button>
            <button type="button" aria-label="Bullets" className={TOOL}><ListIcon kind="bullet" /></button>
            <button type="button" aria-label="Numbering" className={TOOL}><ListIcon kind="number" /></button>
            <button type="button" aria-label="Multilevel list" className={TOOL}><ListIcon kind="outline" /></button>
          </div>
          <textarea aria-label="Notes" className="block w-full flex-1 resize-none border-r-2 border-b border-[#ababab] p-1 outline-none" />
        </div>
      </div>
    </div>
  );
}

function TaskWindow() {
  return (
    <section className="absolute top-[34px] right-[25px] bottom-[146px] left-[68px] flex flex-col border border-b-0 border-[#0072c6] bg-white shadow-[0_0_6px_rgba(0,0,0,0.4)]">
      <div className="grid h-[31px] shrink-0 grid-cols-[1fr_auto_1fr] items-center">
        <QuickBar
          items={[
            ["Task", <Clipboard checked />],
            ["Refresh", <Refresh gray />],
            ["Close", <CloseBox />],
            ["New", <Page />],
            ["Clone", <Cubes gray />],
            ["Find", <Binoculars />],
            ["Complete", <CheckMark />],
            ["Cancel task", <Ban />],
            ["Save", <Floppy />],
            ["Save and close", <Floppy badge="close" />],
            ["Cancel", <Undo />],
            ["Delete", <Cross gray />],
            ["More", <Overflow />],
          ]}
        />
        <span className="text-[#6d6d6d]">Task</span>
        <WindowButtons />
      </div>
      <div className="flex h-[22px] shrink-0">
        <button type="button" aria-label="Application menu" className="flex w-[68px] items-center justify-center bg-[#0072c6]">
          <Logo />
        </button>
        <button type="button" className="w-[53px] border-t border-r border-[#d0d0d0] pt-px text-[#0072c6]">Home</button>
        <div className="flex-1 border-b border-[#d0d0d0]" />
      </div>
      <TaskRibbon />
      <div className="flex min-h-0 flex-1 flex-col gap-0.5 pt-[5px] pr-1.5 pb-[5px] pl-[5px]">
        <div className="flex h-[255px] shrink-0">
          <div className="flex pt-[5px]">
            <TaskFields />
          </div>
          <div className="flex w-4 shrink-0 items-center justify-center">
            <svg width="2" height="14" viewBox="0 0 2 14" aria-hidden="true">
              <path d="M0 0h2v2H0ZM0 4h2v2H0ZM0 8h2v2H0ZM0 12h2v2H0Z" fill="#777" />
            </svg>
          </div>
          <LinkedPanel />
        </div>
        <NotesPanel />
      </div>
      <div className="relative h-6 shrink-0 bg-[#0072c6]">
        <Grip className="absolute right-0.5 bottom-[3px] text-[#9cc9ea]" />
      </div>
    </section>
  );
}

function EntityPopup() {
  return (
    <section className="absolute top-[388px] right-[37px] bottom-2 left-[648px] flex flex-col border border-[#ababab] bg-white px-3 pt-1.5 pb-3 shadow-[0_0_5px_rgba(0,0,0,0.15)]">
      <div className="grid grid-cols-[49px_1fr] items-center gap-y-0.5">
        <span className="font-['DejaVu_Sans_Condensed'] font-bold">Type:</span>
        <span className="leading-5">Entity</span>
        <label htmlFor="find" className="font-['DejaVu_Sans_Condensed'] font-bold">Find:</label>
        <div className={BOX}>
          <input id="find" placeholder="Text to search..." className="min-w-0 flex-1 px-[3px] outline-none placeholder:text-[#a0a0a0]" autoFocus />
          <button type="button" className="w-[38px] border-l border-[#ababab] bg-[#ececec] text-[#808080]">Search</button>
        </div>
      </div>
      <hr className="mt-[5px] border-[#ababab]" />
      <p className="mt-0.5 pl-[3px] leading-4">Available records:</p>
      <div className="mt-3 min-h-0 flex-1 overflow-hidden border border-[#ababab]">
        <table className="w-full table-fixed border-collapse text-left">
          <colgroup>
            <col className="w-[18px]" />
            <col className="w-[222px]" />
            <col className="w-[267px]" />
            <col />
          </colgroup>
          <thead>
            <tr className="h-[18px] border-b border-[#ababab]">
              <th aria-label="Row marker" />
              <th className="border-l border-[#ababab] px-[3px] font-normal">
                <span className="flex items-center justify-between pr-3.5">
                  Name
                  <Arrow dir="up" />
                </span>
              </th>
              <th className="border-l border-[#ababab] px-[3px] font-normal">Entity Company Name</th>
              <th className="border-l border-[#ababab] px-[3px] font-normal">Flagged</th>
            </tr>
          </thead>
          <tbody>
            {GROUPS.map(([name, count, icon], i) => (
              <tr key={name} className="h-[29px]">
                <td className="pl-1.5">{i === 0 && <Arrow dir="right" />}</td>
                <td colSpan={3} className="border-l border-[#ababab]">
                  <div className={i === 0 ? "border-b border-white bg-[#e3f0fb]" : "border-b border-white bg-[#e0e0e0]"}>
                    <div className="flex h-7 items-center pl-[7px] font-['DejaVu_Sans_Condensed'] font-bold text-[#404040]">
                      <Arrow dir="right" />
                      <span className="w-[45px] shrink-0 pl-[7px]">Type:</span>
                      <span className="mr-1">{icon}</span>
                      {name} (Count={count})
                    </div>
                  </div>
                </td>
              </tr>
            ))}
          </tbody>
        </table>
      </div>
      <hr className="mt-2.5 border-[#ababab]" />
      <div className="mt-[13px] flex justify-end">
        <button type="button" className="h-[22px] w-[58px] border border-r-0 border-[#ababab] bg-linear-to-b from-[#f4f4f4] to-[#e4e4e4]">
          New
        </button>
        <button type="button" aria-label="New record type" className="flex h-[22px] w-[17px] items-center justify-center border border-[#ababab] bg-linear-to-b from-[#f4f4f4] to-[#e4e4e4]">
          <Arrow />
        </button>
      </div>
      <Grip className="absolute right-px bottom-px text-[#bdbdbd]" />
    </section>
  );
}

export default function App() {
  return (
    <main className="relative h-screen min-h-[700px] min-w-[1200px] overflow-hidden bg-white font-[Roboto,'Noto_Sans',sans-serif] text-[11px] leading-[18px] text-[#3c3c3c]">
      <Gradients />
      <div className="absolute right-[29px] bottom-0 left-[640px] h-24 bg-black" />
      <div className="absolute inset-x-0 top-0 bottom-[91px] bg-black p-[7px]">
        <MainWindow />
      </div>
      <TaskWindow />
      <EntityPopup />
    </main>
  );
}
